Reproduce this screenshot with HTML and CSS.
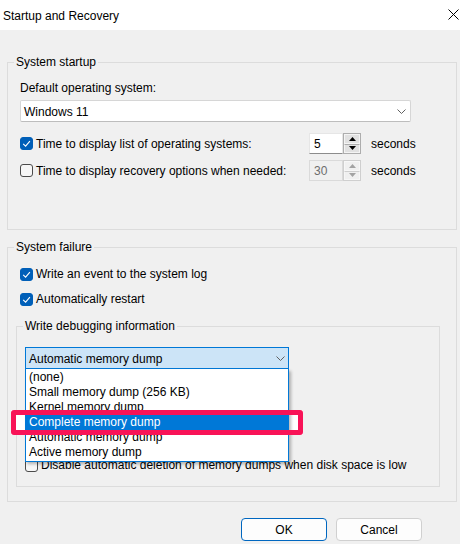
FILE: index.html
```html
<!DOCTYPE html>
<html lang="en">
<head>
<meta charset="utf-8">
<title>Startup and Recovery</title>
<link rel="stylesheet" href="styles.css">
</head>
<body>
<div class="titlebar">
  <span class="title">Startup and Recovery</span>
  <svg class="close" width="11" height="11" viewBox="0 0 11 11"><path d="M0.5 0.5 L10.5 10.5 M10.5 0.5 L0.5 10.5" stroke="#000" stroke-width="1" fill="none"/></svg>
</div>
<div class="content">
  <fieldset class="group startup">
    <legend>System startup</legend>
    <div class="label">Default operating system:</div>
    <div class="select">
      <span>Windows 11</span>
      <svg class="chev" width="9" height="5" viewBox="0 0 9 5"><polyline points="0.5,0.5 4.5,4.5 8.5,0.5" fill="none" stroke="#606060" stroke-width="1"/></svg>
    </div>
    <div class="timegrid">
      <label class="check"><span class="box on"><svg width="13" height="13" viewBox="0 0 13 13"><polyline points="3.2,6.8 5.6,9.1 9.9,4.2" fill="none" stroke="#fff" stroke-width="1.1"/></svg></span>Time to display list of operating systems:</label>
      <div class="spin">
        <span class="spin-input">5</span>
        <span class="spin-btns">
          <span class="spin-btn"><svg width="7" height="4" viewBox="0 0 7 4"><polygon points="0,4 3.5,0 7,4" fill="#000"/></svg></span>
          <span class="spin-btn"><svg width="7" height="4" viewBox="0 0 7 4"><polygon points="0,0 3.5,4 7,0" fill="#000"/></svg></span>
        </span>
      </div>
      <span class="unit">seconds</span>
      <label class="check"><span class="box"></span>Time to display recovery options when needed:</label>
      <div class="spin disabled">
        <span class="spin-input">30</span>
        <span class="spin-btns">
          <span class="spin-btn"><svg width="7" height="4" viewBox="0 0 7 4"><polygon points="0,4 3.5,0 7,4" fill="#a3a3a3"/></svg></span>
          <span class="spin-btn"><svg width="7" height="4" viewBox="0 0 7 4"><polygon points="0,0 3.5,4 7,0" fill="#a3a3a3"/></svg></span>
        </span>
      </div>
      <span class="unit">seconds</span>
    </div>
  </fieldset>

  <fieldset class="group failure">
    <legend>System failure</legend>
    <label class="check row first"><span class="box on"><svg width="13" height="13" viewBox="0 0 13 13"><polyline points="3.2,6.8 5.6,9.1 9.9,4.2" fill="none" stroke="#fff" stroke-width="1.1"/></svg></span>Write an event to the system log</label>
    <label class="check row"><span class="box on"><svg width="13" height="13" viewBox="0 0 13 13"><polyline points="3.2,6.8 5.6,9.1 9.9,4.2" fill="none" stroke="#fff" stroke-width="1.1"/></svg></span>Automatically restart</label>

    <fieldset class="group debug">
      <legend>Write debugging information</legend>
      <div class="combo-wrap">
        <div class="combo">
          <span>Automatic memory dump</span>
          <svg class="chev" width="9" height="5" viewBox="0 0 9 5"><polyline points="0.5,0.5 4.5,4.5 8.5,0.5" fill="none" stroke="#606060" stroke-width="1"/></svg>
        </div>
        <div class="hl-back"></div>
        <ul class="droplist">
          <li>(none)</li>
          <li>Small memory dump (256 KB)</li>
          <li>Kernel memory dump</li>
          <li class="selected">Complete memory dump</li>
          <li>Automatic memory dump</li>
          <li>Active memory dump</li>
        </ul>
        <div class="hl-frame"></div>
      </div>
      <label class="check disable"><span class="box"></span>Disable automatic deletion of memory dumps when disk space is low</label>
    </fieldset>
  </fieldset>

  <div class="buttons">
    <button class="btn default">OK</button>
    <button class="btn">Cancel</button>
  </div>
</div>
</body>
</html>
```
FILE: styles.css
```css
* { box-sizing: border-box; }
html, body { margin: 0; padding: 0; }
body {
  width: 460px;
  height: 544px;
  overflow: hidden;
  background: #f0f0f0;
  font-family: "Liberation Sans", Arial, sans-serif;
  font-size: 12px;
  line-height: 14px;
  color: #000;
}
.titlebar {
  height: 30px;
  background: #fff;
  display: flex;
  justify-content: space-between;
  align-items: flex-start;
  padding: 9px 0 0 3px;
}
.close { margin: 0 1px 0 0; }
.content { padding: 25px 3px 0 7px; }

.group {
  margin: 0;
  border: 1px solid #dcdcdc;
  min-width: 0;
}
.group legend {
  padding: 0 2px;
  line-height: 14px;
}
.startup { padding: 0 44px 48px 12px; }
.startup legend { margin-left: -6px; }

.label { margin-top: 12px; }
.select {
  margin-top: 5px;
  width: 391px;
  height: 22px;
  background: #fff;
  border: 1px solid #d6d6d6;
  border-bottom-color: #bdbdbd;
  border-radius: 2px;
  display: flex;
  align-items: center;
  justify-content: space-between;
  padding: 1px 4px 0 3px;
}
.chev { display: block; }

.timegrid {
  margin-top: 11px;
  display: grid;
  grid-template-columns: 289px auto 1fr;
  row-gap: 6px;
  align-items: center;
}
.check { display: flex; align-items: center; }
.box {
  width: 13px;
  height: 13px;
  border: 1px solid #4b4b4b;
  border-radius: 3px;
  background: #f7f7f7;
  margin-right: 3px;
  flex: none;
  position: relative;
}
.box.on { background: #005fb8; border-color: #005fb8; }
.box svg { position: absolute; left: -1px; top: -1px; }

.spin { display: flex; height: 21px; }
.spin-input {
  width: 34px;
  height: 21px;
  background: #fff;
  border: 1px solid #e6e6e6;
  border-bottom-color: #8c8c8c;
  padding: 3px 0 0 4px;
}
.spin-btns {
  width: 18px;
  height: 21px;
  border: 1px solid #adadad;
  display: flex;
  flex-direction: column;
  background: #e1e1e1;
}
.spin-btn {
  flex: 1;
  display: flex;
  align-items: center;
  justify-content: center;
  border: 1px solid #f4f4f4;
}
.spin-btn + .spin-btn { border-top: 1px solid #adadad; }
.spin-btn svg { display: block; }
.disabled .spin-input {
  background: #f0f0f0;
  border-color: #dadada;
  color: #6d6d6d;
}
.disabled .spin-btns { border-color: #cfcfcf; background: #f0f0f0; }
.disabled .spin-btn { border-color: #f7f7f7; }
.disabled .spin-btn + .spin-btn { border-top-color: #cfcfcf; }
.unit { margin-left: 10px; }

.failure {
  margin-top: 10px;
  padding: 0 16px 14px 8px;
}
.failure > legend { margin-left: -2px; }
.row { padding-left: 4px; height: 14px; margin-top: 11px; }
.row.first { margin-top: 13px; }

.debug {
  margin-top: 13px;
  padding: 0 8px 14px 8px;
}
.debug legend { margin-left: -2px; }
.combo-wrap { position: relative; margin-top: 14px; width: 264px; }
.combo {
  height: 22px;
  background: #cce4f7;
  border: 1px solid #0078d7;
  display: flex;
  align-items: center;
  justify-content: space-between;
  padding: 1px 3px 0 3px;
}
.droplist {
  position: absolute;
  left: 0;
  top: 22px;
  width: 264px;
  margin: 0;
  padding: 1px 0;
  list-style: none;
  background: #fff;
  border: 1px solid #0078d7;
  border-top: none;
  box-shadow: 2px 2px 3px rgba(0, 0, 0, 0.28);
  z-index: 5;
}
.droplist li {
  height: 15px;
  line-height: 15px;
  padding-left: 3px;
  white-space: nowrap;
}
.droplist li.selected { background: #0078d7; color: #fff; }
.hl-back {
  position: absolute;
  left: -14px;
  top: 63px;
  width: 292px;
  height: 25px;
  background: #fff;
  z-index: 4;
}
.hl-frame {
  position: absolute;
  left: -14px;
  top: 63px;
  width: 292px;
  height: 25px;
  border: 5px solid #f81357;
  border-radius: 3px;
  z-index: 6;
}
.disable { margin-top: 89px; height: 14px; }

.buttons {
  margin-top: 16px;
  display: flex;
  justify-content: flex-end;
  gap: 9px;
  padding-right: 35px;
}
.btn {
  width: 86px;
  height: 23px;
  background: #fdfdfd;
  border: 1px solid #d0d0d0;
  border-radius: 4px;
  font-family: "Liberation Sans", Arial, sans-serif;
  font-size: 12px;
  color: #000;
  padding: 0;
}
.btn.default { border-color: #0067c0; }
```
